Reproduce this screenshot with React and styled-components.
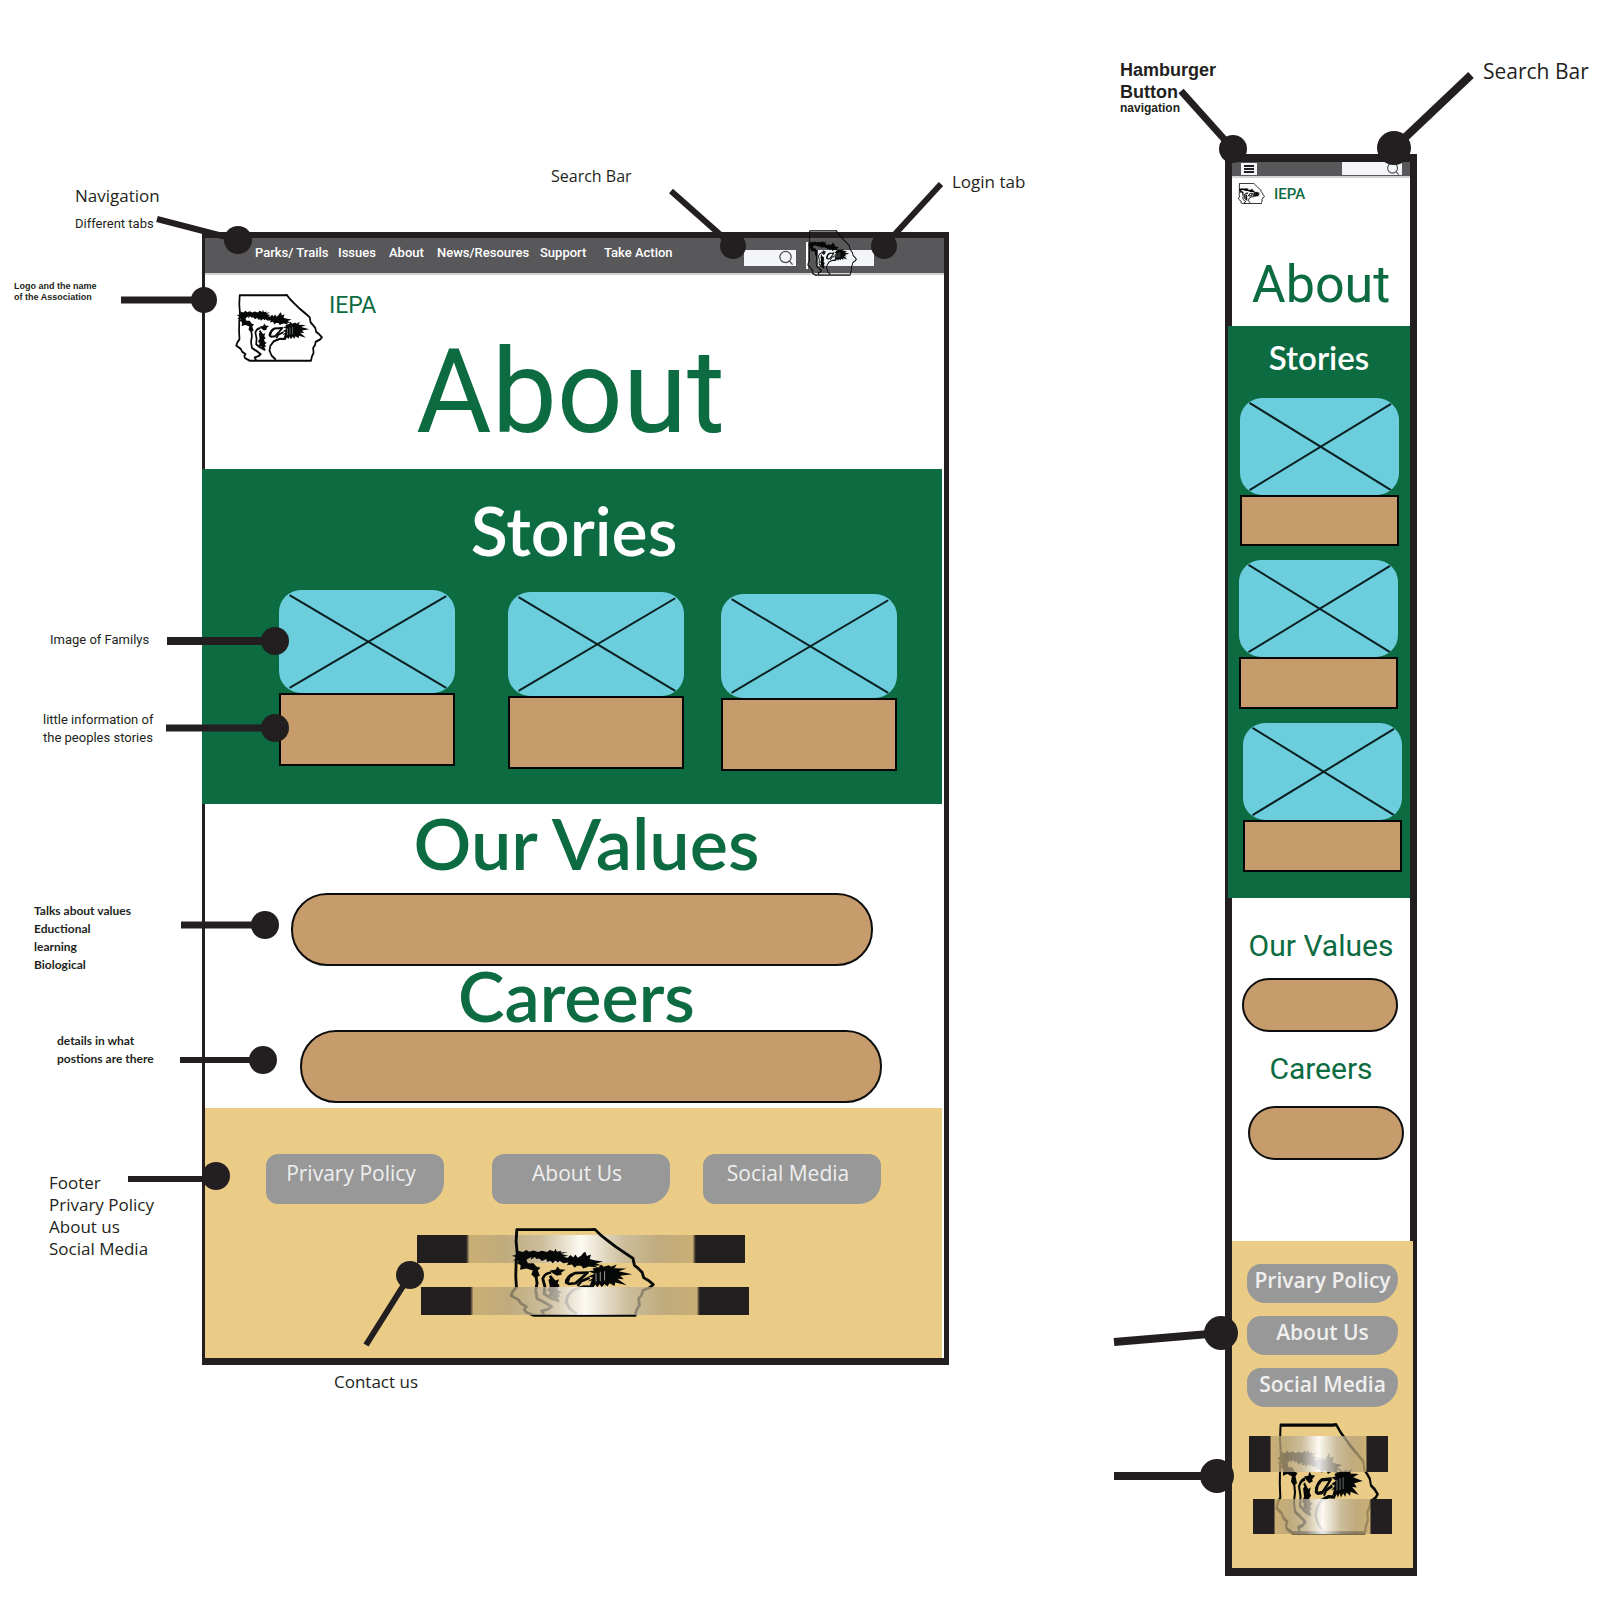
import React from "react";
import styled, { createGlobalStyle } from "styled-components";

const INK = "#231f20";
const GREEN = "#0c6b41";
const TAN = "#c69c6d";
const SAND = "#eacc87";
const BAR = "#58585a";

const HUMANIST = '"Open Sans", "Noto Sans", sans-serif';
const NARROW = 'Roboto, "Open Sans", sans-serif';
const GEOMETRIC = 'Lato, "Open Sans", sans-serif';
const GROTESQUE = '"Liberation Sans", Arial, sans-serif';

const GlobalStyle = createGlobalStyle`
  *, *::before, *::after { box-sizing: border-box; }
  body { margin: 0; background: #fff; color: ${INK}; font-family: ${HUMANIST}; }
  h1, h2, p { margin: 0; font-weight: 400; }
  a { color: inherit; text-decoration: none; }
`;

/* ---------- board ---------- */

const Board = styled.main`
  position: relative;
  display: flex;
  align-items: flex-start;
  gap: 276px;
  min-height: 1608px;
  padding: 154px 24px 31px 202px;
`;

const DesktopFrame = styled.section`
  flex: 0 1 747px;
  margin-top: 78px;
  border: 3px solid ${INK};
  border-width: 6px 5px 7px 3px;
`;

const PhoneFrame = styled.section`
  flex: 0 0 192px;
  min-width: 0;
  border: 7px solid ${INK};
  border-top-width: 8px;
  border-bottom-width: 8px;
`;

/* ---------- desktop header ---------- */

const TopBar = styled.header`
  display: flex;
  align-items: center;
  height: 37px;
  padding-left: 50px;
  background: ${BAR};
  border-bottom: 2px solid #d4d3d4;
`;

const Menu = styled.nav`
  display: grid;
  grid-template-columns: 83px 51px 48px 103px 64px 140px;
  padding-bottom: 6px;
  color: #fff;
  font: 500 13px/20px ${NARROW};
  white-space: nowrap;
`;

const SearchField = styled.label`
  display: flex;
  align-items: center;
  justify-content: flex-end;
  width: ${(p) => p.$width};
  height: ${(p) => p.$height};
  margin-top: ${(p) => p.$drop || 0};
  padding-right: 2px;
  background: #f3f5f8;
`;

const TextInput = styled.input`
  flex: 1;
  min-width: 0;
  width: 100%;
  height: 100%;
  padding: 0 2px;
  border: 0;
  outline: 0;
  background: transparent;
  font: 10px ${HUMANIST};
`;

const Login = styled.div`
  position: relative;
  display: flex;
  align-items: center;
  margin-left: 10px;
  padding-left: 10px;
  height: 27px;
  border-left: 2px solid #fff;
`;

const LoginMark = styled.span`
  position: absolute;
  left: -1px;
  top: -12px;
  line-height: 0;
`;

const Brand = styled.div`
  display: flex;
  align-items: flex-start;
  gap: ${(p) => p.$gap};
  padding: ${(p) => p.$pad};
  color: ${GREEN};
`;

const BrandName = styled.p`
  font: ${(p) => p.$font};
`;

const Hero = styled.div`
  height: ${(p) => p.$height};
`;

const Title = styled.h1`
  padding: ${(p) => p.$pad};
  color: ${GREEN};
  text-align: center;
  font-family: ${NARROW};
  font-size: ${(p) => p.$size};
  line-height: ${(p) => p.$line};
`;

/* ---------- sections ---------- */

const Heading = styled.h2`
  padding: ${(p) => p.$pad || 0};
  color: ${(p) => p.$color || GREEN};
  text-align: center;
  font-family: ${(p) => p.$family || GEOMETRIC};
  font-weight: ${(p) => p.$weight || 600};
  font-size: ${(p) => p.$size};
  line-height: ${(p) => p.$line};
  white-space: nowrap;
`;

const Stories = styled.section`
  height: ${(p) => p.$height};
  margin-left: ${(p) => p.$bleed};
  margin-right: ${(p) => p.$inset || 0};
  padding: ${(p) => p.$pad};
  background: ${GREEN};
`;

const CardRow = styled.div`
  display: grid;
  grid-template-columns: 229px 213px 176px;
  padding-left: 77px;
  margin-top: 21px;
`;

const CardStack = styled.div`
  display: grid;
  gap: 14px;
  margin-top: 21px;
`;

const Card = styled.article`
  width: ${(p) => p.$width};
  padding-top: ${(p) => p.$drop || 0};
  margin-left: ${(p) => p.$indent || 0};
`;

const Photo = styled.svg`
  display: block;
  width: 100%;
  height: ${(p) => p.$height};
  border-radius: 22px;
  background: #6ccddd;
  stroke: #0a1f1f;
  stroke-width: 2;
`;

const Blurb = styled.div`
  height: ${(p) => p.$height};
  background: ${TAN};
  border: 2px solid #050505;
`;

const Info = styled.section`
  height: ${(p) => p.$height};
  padding-top: ${(p) => p.$top || 0};
`;

const Pill = styled.div`
  width: ${(p) => p.$width};
  height: ${(p) => p.$height};
  margin-left: ${(p) => p.$indent};
  border: 2px solid #0d0d0d;
  border-radius: 36px;
  background: ${TAN};
`;

/* ---------- footer ---------- */

const Footer = styled.footer`
  height: ${(p) => p.$height};
  margin-right: ${(p) => p.$inset};
  padding: ${(p) => p.$pad};
  background: ${SAND};
`;

const ButtonRow = styled.div`
  display: grid;
  grid-template-columns: 226px 211px 178px;
`;

const ButtonStack = styled.div`
  display: grid;
  gap: 13px;
`;

const LinkButton = styled.button`
  width: ${(p) => p.$width};
  height: ${(p) => p.$height};
  padding: ${(p) => p.$pad};
  border: 0;
  border-radius: ${(p) => p.$radius};
  background: #989898;
  color: #efefef;
  font: ${(p) => p.$font};
  white-space: nowrap;
`;

const Contact = styled.div`
  position: relative;
  display: grid;
  gap: ${(p) => p.$gap};
  margin: ${(p) => p.$margin};
`;

const Band = styled.div`
  position: relative;
  z-index: ${(p) => p.$layer};
  width: ${(p) => p.$width};
  height: ${(p) => p.$height};
  margin-left: ${(p) => p.$indent || 0};
  background: linear-gradient(
    90deg,
    ${INK} 15%,
    rgba(193, 167, 112, 0.8) 16%,
    rgba(178, 160, 122, 0.75) 27%,
    rgba(194, 184, 162, 0.75) 38%,
    rgba(255, 255, 255, 0.9) 50%,
    rgba(194, 184, 162, 0.75) 63%,
    rgba(178, 160, 122, 0.75) 74%,
    rgba(193, 167, 112, 0.8) 84%,
    ${INK} 85%
  );
`;

const ContactMark = styled.span`
  position: absolute;
  z-index: 1;
  left: ${(p) => p.$left};
  top: ${(p) => p.$top};
  line-height: 0;
`;

/* ---------- phone header ---------- */

const PhoneBar = styled.header`
  display: flex;
  justify-content: space-between;
  height: 16px;
  padding: 0 8px 0 9px;
  background: ${BAR};
  border-bottom: 2px solid #d4d3d4;
`;

const MenuButton = styled.button`
  display: grid;
  place-items: center;
  width: 16px;
  height: 12px;
  margin-top: 1px;
  padding: 0;
  border: 0;
  background: #f3f5f8;
`;

/* ---------- callouts ---------- */

const Callout = styled.p`
  position: absolute;
  left: ${(p) => p.$x}px;
  top: ${(p) => p.$y}px;
  white-space: pre;
  font: ${(p) => p.$font};
`;

const Leaders = styled.svg`
  position: absolute;
  left: 0;
  top: 0;
  width: 100%;
  height: 100%;
  z-index: 3;
  overflow: visible;
  pointer-events: none;
  stroke: ${INK};
  fill: ${INK};
`;

/* ---------- drawings ---------- */

function Logo({ width, height, weight = 8 }) {
  return (
    <svg width={width} height={height} viewBox="303 325 411 266" preserveAspectRatio="none" aria-hidden="true">
      <g fill="none" stroke="#050807" strokeWidth={weight} strokeLinejoin="round">
        <path d="M325 330H530L545 329L560 345L580 362L602 380L630 400L652 416L656 436L668 447L678 458L682 473L696 482L709 494L700 503L680 512L676 526L668 536L670 556L662 570L658 586H372L350 576L346 568L352 560L336 550L330 540L309 527L314 514L324 502L322 470L323 430L326 400L323 365Z" />
        <path d="M378 462L382 490L378 512L382 536L400 546L423 560L412 568L395 573L402 585" />
        <path d="M404 500L398 476Q404 460 422 458M418 468L430 484L438 498M404 498L402 522L420 534L444 544" />
        <path d="M540 501L514 500L484 510L468 528L464 546L474 566L494 582" />
        <path d="M464 488Q466 468 488 460L524 458L506 476L490 490L472 492Z" />
        <path d="M496 498L506 484L530 474" />
      </g>
      <g fill="#050807">
        <path d="M328 393L342 397L352 391L360 396L372 392L384 397L396 393L410 397L418 391L430 395L434 387L438 396L450 393L448 398L468 397L450 403L470 408L456 411L468 414L476 406L484 413L490 404L496 414L506 408L512 400L518 396L522 409L534 404L530 418L546 422L568 425L548 431L562 436L544 438L556 444L528 440L512 446L506 438L494 438L488 444L480 434L466 436L470 428L456 430L446 424L440 428L434 422L426 430L420 424L410 426L408 418L396 424L388 416L380 418L376 412L364 420L366 412L352 420L356 430L372 430L380 440L392 444L384 452L390 468L376 474L366 464L370 452L352 446L334 450L336 436L326 430L330 422L314 422L326 414L311 408L328 404Z" />
        <path d="M538 446L556 442L562 434L570 441L584 436L590 441L606 434L600 445L634 446L612 454L650 463L616 468L626 478L608 477L634 496L602 488L600 498L586 490L580 500L572 492L564 502L558 492L552 502L546 494L540 503L534 496L528 502L536 482L524 486L540 474L526 470L544 462L526 454L542 452Z" />
        <path d="M418 452L434 450L440 440L446 448L462 450L450 458L452 464L438 468L426 460ZM414 480L424 474L434 482L444 478L440 490L446 498L438 504L444 514L452 516L442 522L448 530L440 532L446 546L430 538L426 530L414 530L418 516L410 512L418 500Z" />
        <path d="M460 482L474 464L492 456L484 468L476 474L470 492Z" />
      </g>
      <g stroke="#8d8d8d" strokeWidth="3">
        <path d="M548 460V486M560 456V484M572 454V482" />
      </g>
    </svg>
  );
}

function SearchGlyph({ size }) {
  return (
    <svg width={size} height={size} viewBox="0 0 17 17" fill="none" stroke="#4b4b4d" strokeWidth="1.3" aria-hidden="true">
      <circle cx="8" cy="7.5" r="6" />
      <path d="M12.2 11.8L15.5 15.5" />
    </svg>
  );
}

function StoryCard({ width, photo, blurb, drop, indent }) {
  return (
    <Card $width={width} $drop={drop} $indent={indent}>
      <Photo $height={photo} aria-label="Family photo" role="img">
        <line x1="6%" y1="5%" x2="95%" y2="95%" />
        <line x1="95%" y1="6%" x2="6%" y2="95%" />
      </Photo>
      <Blurb $height={blurb} />
    </Card>
  );
}

const LEADERS = [
  [157, 219, 238, 240, 6, 14],
  [121, 300, 204, 300, 7, 13],
  [671, 191, 733, 246, 6, 13],
  [941, 184, 884, 246, 6, 13],
  [167, 641, 275, 641, 8, 14],
  [166, 728, 275, 728, 7, 14],
  [181, 925, 265, 925, 7, 14],
  [180, 1060, 263, 1060, 6, 14],
  [128, 1179, 216, 1179, 6, 0],
  [216, 1176, 216, 1176, 0, 14],
  [366, 1345, 410, 1275, 6, 14],
  [1181, 91, 1233, 149, 7, 14],
  [1471, 75, 1394, 148, 8, 17],
  [1114, 1342, 1221, 1333, 8, 17],
  [1114, 1476, 1217, 1476, 8, 17],
];

const CALLOUTS = [
  [75, 184, `400 17px/24px ${HUMANIST}`, "Navigation"],
  [75, 214, `400 13px/20px ${NARROW}`, "Different tabs"],
  [14, 281, `700 9px/11px ${GROTESQUE}`, "Logo and the name\nof the Association"],
  [551, 164, `400 16px/24px ${HUMANIST}`, "Search Bar"],
  [952, 170, `400 17px/24px ${HUMANIST}`, "Login tab"],
  [50, 630, `400 13px/20px ${NARROW}`, "Image of Familys"],
  [43, 711, `400 13px/18px ${NARROW}`, "little information of\nthe peoples stories"],
  [34, 902, `700 12px/18px ${GEOMETRIC}`, "Talks about values\nEductional\nlearning\nBiological"],
  [57, 1032, `700 12px/18px ${GEOMETRIC}`, "details in what\npostions are there"],
  [49, 1172, `400 17px/22px ${HUMANIST}`, "Footer\nPrivary Policy\nAbout us\nSocial Media"],
  [334, 1370, `400 17px/24px ${HUMANIST}`, "Contact us"],
  [1120, 59, `700 18px/22px ${GROTESQUE}`, "Hamburger\nButton"],
  [1120, 101, `700 12px/14px ${GROTESQUE}`, "navigation"],
  [1483, 56, `400 21px/30px ${HUMANIST}`, "Search Bar"],
];

const LINKS = ["Parks/ Trails", "Issues", "About", "News/Resoures", "Support", "Take Action"];

/* ---------- mockups ---------- */

function Desktop() {
  return (
    <DesktopFrame aria-label="Desktop layout">
      <TopBar>
        <Menu>
          {LINKS.map((text) => (
            <a href="#about" key={text}>{text}</a>
          ))}
        </Menu>
        <SearchField $width="52px" $height="16px" $drop="4px">
          <TextInput aria-label="Search" />
          <SearchGlyph size={16} />
        </SearchField>
        <Login>
          <SearchField $width="56px" $height="16px" $drop="4px">
            <TextInput aria-label="Login" />
          </SearchField>
          <LoginMark><Logo width={50} height={46} weight={7} /></LoginMark>
        </Login>
      </TopBar>
      <Hero $height="194px">
        <Brand $gap="6px" $pad="19px 0 0 30px">
          <Logo width={88} height={68} />
          <BrandName $font={`400 23px/24px ${NARROW}`}>IEPA</BrandName>
        </Brand>
        <Title $size="116px" $line="60px" $pad="0 8px 0 0">About</Title>
      </Hero>
      <Stories $height="335px" $bleed="-3px" $inset="2px" $pad="22px 0 0">
        <Heading $color="#fff" $size="68px" $line="78px" $pad="0 0 0 4px">Stories</Heading>
        <CardRow>
          <StoryCard width="176px" photo="103px" blurb="73px" />
          <StoryCard width="176px" photo="104px" blurb="73px" drop="2px" />
          <StoryCard width="176px" photo="104px" blurb="73px" drop="4px" />
        </CardRow>
      </Stories>
      <Info $height="304px">
        <Heading $size="72px" $line="77px" $pad="0 0 12px 24px">Our Values</Heading>
        <Pill $width="582px" $height="73px" $indent="86px" />
        <Heading $size="70px" $line="58px" $pad="0 0 6px 4px">Careers</Heading>
        <Pill $width="582px" $height="73px" $indent="95px" />
      </Info>
      <Footer $height="250px" $inset="2px" $pad="46px 0 0 61px">
        <ButtonRow>
          {["Privary Policy", "About Us", "Social Media"].map((text) => (
            <LinkButton key={text} $width="178px" $height="50px" $pad="0 12px 12px 4px" $radius="12px 12px 22px 12px" $font={`400 21px/24px ${HUMANIST}`}>
              {text}
            </LinkButton>
          ))}
        </ButtonRow>
        <Contact $gap="24px" $margin="31px 0 0 151px">
          <Band $layer={0} $width="328px" $height="28px" />
          <Band $layer={2} $width="328px" $height="28px" $indent="4px" />
          <ContactMark $left="92px" $top="-7px"><Logo width={146} height={89} /></ContactMark>
        </Contact>
      </Footer>
    </DesktopFrame>
  );
}

function Phone() {
  return (
    <PhoneFrame aria-label="Phone layout">
      <PhoneBar>
        <MenuButton aria-label="Menu">
          <svg width="10" height="8" viewBox="0 0 10 8" fill={INK}>
            <path d="M0 0h10v2H0zM0 3h10v2H0zM0 6h10v2H0z" />
          </svg>
        </MenuButton>
        <SearchField $width="60px" $height="13px">
          <TextInput aria-label="Search" />
          <SearchGlyph size={14} />
        </SearchField>
      </PhoneBar>
      <Hero $height="148px">
        <Brand $gap="9px" $pad="5px 0 0 6px">
          <Logo width={27} height={21} weight={12} />
          <BrandName $font={`500 15px/22px ${NARROW}`}>IEPA</BrandName>
        </Brand>
        <Title $size="52px" $line="60px" $pad="50px 0 0">About</Title>
      </Hero>
      <Stories $height="572px" $bleed="-4px" $pad="11px 0 0">
        <Heading $color="#fff" $size="33px" $line="40px">Stories</Heading>
        <CardStack>
          <StoryCard width="159px" photo="97px" blurb="51px" indent="12px" />
          <StoryCard width="159px" photo="97px" blurb="52px" indent="11px" />
          <StoryCard width="159px" photo="97px" blurb="52px" indent="15px" />
        </CardStack>
      </Stories>
      <Info $height="343px" $top="18px">
        <Heading $family={NARROW} $weight={400} $size="30px" $line="60px" $pad="0 0 2px">Our Values</Heading>
        <Pill $width="156px" $height="54px" $indent="10px" />
        <Heading $family={NARROW} $weight={400} $size="30px" $line="74px">Careers</Heading>
        <Pill $width="156px" $height="54px" $indent="16px" />
      </Info>
      <Footer $height="327px" $inset="-3px" $pad="23px 0 0 15px">
        <ButtonStack>
          {["Privary Policy", "About Us", "Social Media"].map((text) => (
            <LinkButton key={text} $width="151px" $height="39px" $pad="0 4px 7px" $radius="14px 14px 24px 18px" $font={`600 21px/24px ${HUMANIST}`}>
              {text}
            </LinkButton>
          ))}
        </ButtonStack>
        <Contact $gap="27px" $margin="29px 0 0 2px">
          <Band $layer={2} $width="139px" $height="36px" />
          <Band $layer={2} $width="139px" $height="35px" $indent="4px" />
          <ContactMark $left="26px" $top="-13px"><Logo width={104} height={112} /></ContactMark>
        </Contact>
      </Footer>
    </PhoneFrame>
  );
}

export default function App() {
  return (
    <>
      <GlobalStyle />
      <Board>
        <Desktop />
        <Phone />
        {CALLOUTS.map(([x, y, font, text]) => (
          <Callout key={`${x}-${y}`} $x={x} $y={y} $font={font}>{text}</Callout>
        ))}
        <Leaders aria-hidden="true">
          {LEADERS.map(([x1, y1, x2, y2, weight, r]) => (
            <g key={`${x1}-${y1}`}>
              <line x1={x1} y1={y1} x2={x2} y2={y2} strokeWidth={weight} />
              <circle cx={x2} cy={y2} r={r} stroke="none" />
            </g>
          ))}
        </Leaders>
      </Board>
    </>
  );
}
